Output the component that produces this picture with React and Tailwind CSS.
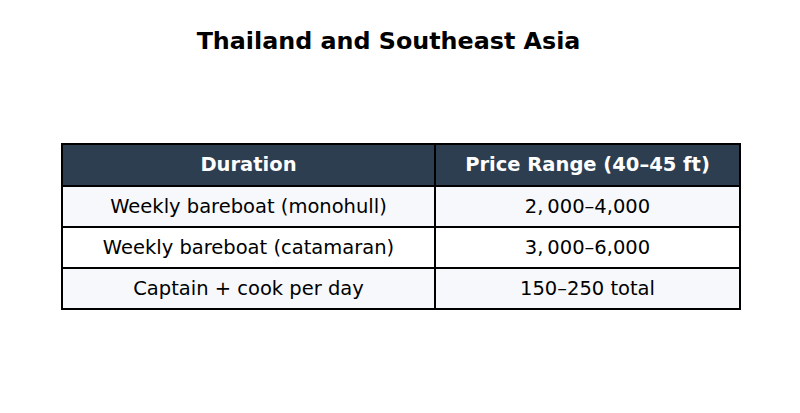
export default function App() {
  const rows = [
    ["Weekly bareboat (monohull)", "2,\u2009000–4,000", "bg-[#f7f8fc]"],
    ["Weekly bareboat (catamaran)", "3,\u2009000–6,000", "bg-white"],
    ["Captain + cook per day", "150–250 total", "bg-[#f7f8fc]"],
  ];
  return (
    <div className="w-[800px] h-[413px] bg-white flex flex-col" style={{ fontFamily: '"DejaVu Sans", sans-serif' }}>
      <div className="pt-[26px] pr-[23px] text-center text-[23.8px] font-bold leading-[30px] text-black">
        Thailand and Southeast Asia
      </div>
      <div className="pt-[87px] pl-[61px]">
        <table className="border-collapse text-[19.5px] text-black">
          <thead>
            <tr className="h-[42px] bg-[#2c3e50] text-white font-bold">
              <th className="w-[373px] border-2 border-black p-0">Duration</th>
              <th className="w-[305px] border-2 border-black p-0">Price Range (40–45 ft)</th>
            </tr>
          </thead>
          <tbody>
            {rows.map(([a, b, bg]) => (
              <tr key={a} className={`h-[41px] ${bg}`}>
                <td className="border-2 border-black p-0 text-center">{a}</td>
                <td className="border-2 border-black p-0 text-center">{b}</td>
              </tr>
            ))}
          </tbody>
        </table>
      </div>
    </div>
  );
}
